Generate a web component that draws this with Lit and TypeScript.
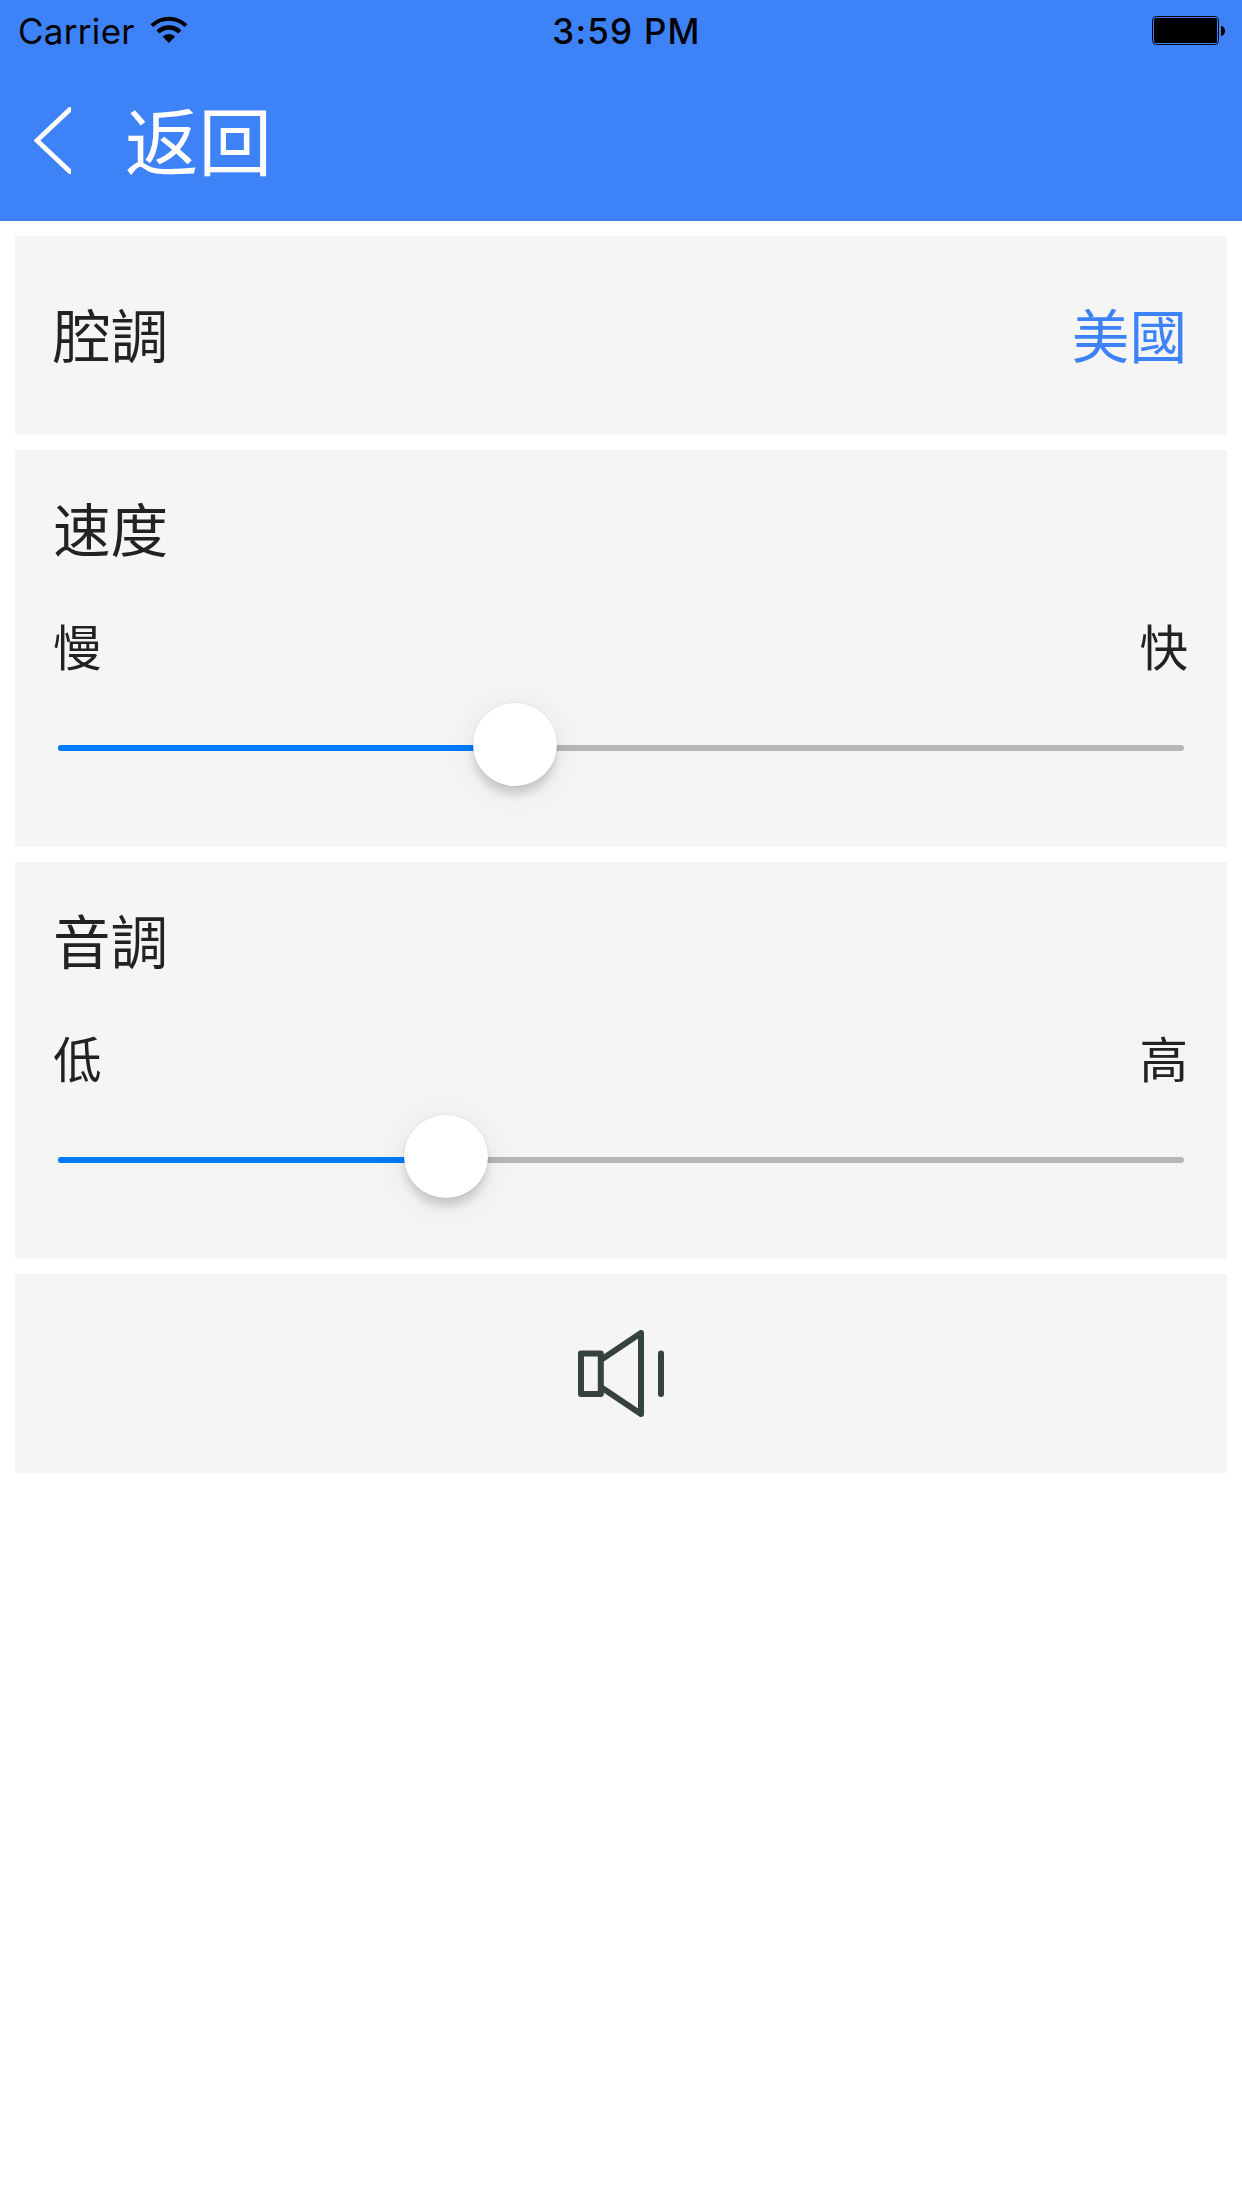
import { LitElement, html, css } from "lit";
import { customElement, property } from "lit/decorators.js";

@customElement("status-bar")
class StatusBar extends LitElement {
  static styles = css`
    :host {
      display: grid;
      grid-template-columns: 1fr auto 1fr;
      align-items: center;
      height: 60px;
      padding: 0 17px 0 18px;
      box-sizing: border-box;
      color: #000;
      font-family: Inter, "Liberation Sans", sans-serif;
      font-size: 35px;
      line-height: 58px;
    }
    .left {
      display: flex;
      align-items: center;
      gap: 15px;
    }
    .carrier {
      letter-spacing: 0.3px;
      padding-top: 2px;
    }
    .time {
      font-weight: 500;
      letter-spacing: 1.2px;
      padding: 2px 0 0 10px;
    }
    .battery {
      justify-self: end;
    }
    svg {
      display: block;
    }
  `;

  render() {
    return html`
      <div class="left">
        <span class="carrier">Carrier</span>
        <svg class="wifi" width="38" height="28" viewBox="0 0 38 28">
          <path d="M0.4 8.3A26.3 26.3 0 0 1 37.4 8.3L34.6 11.1A22.3 22.3 0 0 0 3.2 11.1Z" />
          <path d="M6.4 14.4A17.8 17.8 0 0 1 31.4 14.4L28.3 17.5A13.4 13.4 0 0 0 9.5 17.5Z" />
          <path d="M12.6 20.6A9 9 0 0 1 25.2 20.6L18.9 27Z" />
        </svg>
      </div>
      <span class="time">3:59 PM</span>
      <svg class="battery" width="73" height="30" viewBox="0 0 73 30">
        <rect x="0.5" y="1.5" width="66" height="28" rx="4" fill="none" stroke="#000" />
        <rect x="2" y="3" width="63" height="25" rx="2.5" />
        <path d="M69 11a4 5 0 0 1 0 10z" />
      </svg>
    `;
  }
}

@customElement("range-slider")
class RangeSlider extends LitElement {
  @property({ type: Number }) value = 0;

  static styles = css`
    :host {
      display: flex;
      align-items: center;
      height: 84px;
      position: relative;
    }
    .track {
      flex: 1;
      height: 6px;
      margin-top: 6px;
      border-radius: 3px;
      background: #b6b6b6;
      overflow: hidden;
    }
    .fill {
      height: 6px;
      background: #007aff;
    }
    .knob {
      position: absolute;
      top: -0.5px;
      width: 83.5px;
      height: 83.5px;
      margin-left: -41.75px;
      border-radius: 50%;
      background: #fff;
      box-shadow:
        0 0 0 1px rgba(0, 0, 0, 0.035),
        0 9px 9px -1px rgba(0, 0, 0, 0.15),
        0 5px 38px rgba(0, 0, 0, 0.08);
    }
  `;

  render() {
    return html`
      <div class="track"><div class="fill" style="width:${this.value}%"></div></div>
      <div class="knob" style="left:${this.value}%"></div>
    `;
  }
}

@customElement("slider-card")
class SliderCard extends LitElement {
  @property() heading = "";
  @property() low = "";
  @property() high = "";
  @property({ type: Number }) value = 0;

  static styles = css`
    :host {
      display: flex;
      flex-direction: column;
      height: 397px;
      padding: 37px 38px 0;
      box-sizing: border-box;
      background: #f5f5f5;
    }
    .heading {
      font-size: 57.6px;
      line-height: 80px;
    }
    .ends {
      display: flex;
      justify-content: space-between;
      margin-top: 43px;
      padding-right: 1px;
      font-size: 48.5px;
      line-height: 70px;
    }
    range-slider {
      margin: 23px 5px 0;
    }
  `;

  render() {
    return html`
      <div class="heading">${this.heading}</div>
      <div class="ends"><span>${this.low}</span><span>${this.high}</span></div>
      <range-slider .value=${this.value}></range-slider>
    `;
  }
}

@customElement("app-root")
class AppRoot extends LitElement {
  static styles = css`
    :host {
      display: block;
      min-height: 2208px;
      background: #fff;
      color: #222;
      font-family: "Noto Sans CJK SC", "Noto Sans CJK TC", sans-serif;
    }
    .header {
      height: 221px;
      background: #3e82f7;
    }
    .nav {
      display: flex;
      align-items: center;
      height: 161px;
      padding-left: 34px;
      gap: 54px;
      color: #fff;
      font-size: 73.5px;
      line-height: 100px;
    }
    .title {
      padding-bottom: 6px;
    }
    .back {
      display: block;
    }
    .cards {
      display: flex;
      flex-direction: column;
      gap: 15px;
      padding: 15px;
    }
    .card {
      display: flex;
      align-items: center;
      height: 199px;
      padding: 0 38px;
      box-sizing: border-box;
      background: #f5f5f5;
    }
    .accent {
      justify-content: space-between;
      padding: 0 40px 5px 38px;
      font-size: 57.6px;
      line-height: 80px;
    }
    .choice {
      color: #3e82f7;
    }
    .sound {
      justify-content: center;
    }
  `;

  render() {
    return html`
      <div class="header">
        <status-bar></status-bar>
        <div class="nav">
          <svg class="back" width="37" height="67" viewBox="0 0 37 67">
            <path d="M39 -0.500L2.900 33.500L39 67.500" fill="none" stroke="#fff" stroke-width="4.800" />
          </svg>
          <span class="title">返回</span>
        </div>
      </div>
      <div class="cards">
        <div class="card accent"><span>腔調</span><span class="choice">美國</span></div>
        <slider-card heading="速度" low="慢" high="快" .value=${40.6}></slider-card>
        <slider-card heading="音調" low="低" high="高" .value=${34.45}></slider-card>
        <div class="card sound">
          <svg width="86" height="87" viewBox="0 0 86 87" fill="none" stroke="#36423f" stroke-width="6" stroke-linecap="round" stroke-linejoin="round">
            <path d="M3 23.500H22.800V64H3Z" />
            <path d="M25 28.500L63 3V84L25 58.500" />
            <path d="M83 23.500V64" />
          </svg>
        </div>
      </div>
    `;
  }
}
